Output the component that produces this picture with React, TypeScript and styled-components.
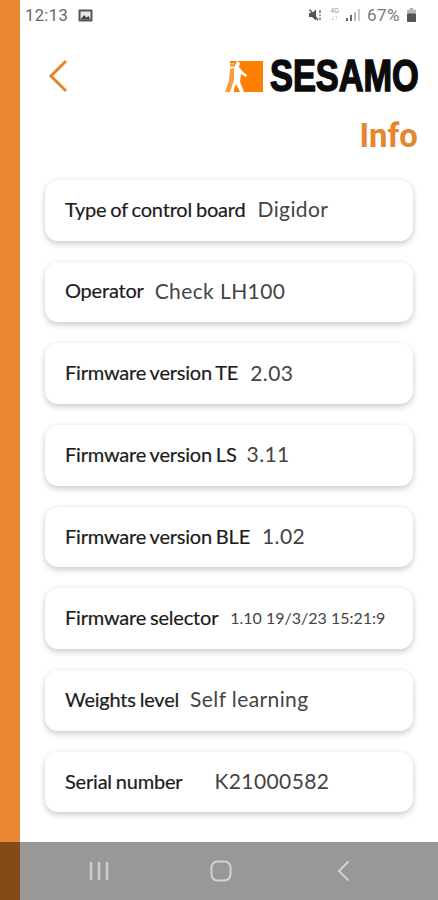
import React, { FC } from 'react';
import styled, { createGlobalStyle } from 'styled-components';

const rows = [
    { label: 'Type of control board', value: 'Digidor', gap: 12 },
    { label: 'Operator', value: 'Check LH100', gap: 11 },
    { label: 'Firmware version TE', value: '2.03', gap: 12 },
    { label: 'Firmware version LS', value: '3.11', gap: 10 },
    { label: 'Firmware version BLE', value: '1.02', gap: 12 },
    { label: 'Firmware selector', value: '1.10 19/3/23 15:21:9', gap: 12, small: true },
    { label: 'Weights level', value: 'Self learning', gap: 11 },
    { label: 'Serial number', value: 'K21000582', gap: 32 },
];

const App: FC = () => (
    <>
        <GlobalStyle />
        <Screen>
            <Main>
                <Stripe />
                <Content>
                    <StatusBar>
                        <StatusLeft>
                            <Clock>12:13</Clock>
                            <svg width="15" height="13" viewBox="0 0 15 13">
                                <rect x="0.5" y="0.5" width="14" height="12" rx="1" fill="#555" />
                                <rect x="2.5" y="2.5" width="10" height="8" fill="#e8e8e8" />
                                <path d="M2.5 10.5 L6 6 L8.5 8.5 L10.5 7 L12.5 10.5 Z" fill="#444" />
                            </svg>
                        </StatusLeft>
                        <StatusRight>
                            <svg width="15" height="14" viewBox="0 0 15 14">
                                <path d="M1 5 H4 L8 1.5 V12.5 L4 9 H1 Z" fill="#555" />
                                <path d="M1.5 1.5 L10 12" stroke="#555" strokeWidth="1.4" />
                                <path d="M12 2 V5 M12 6.5 V8 M12 9.5 V12" stroke="#666" strokeWidth="1.4" />
                            </svg>
                            <NetworkText>
                                <span>4G</span>
                                <span>↓↑</span>
                            </NetworkText>
                            <svg width="14" height="12" viewBox="0 0 14 12">
                                <rect x="0" y="9" width="2" height="3" fill="#666" />
                                <rect x="4" y="6" width="2" height="6" fill="#666" />
                                <rect x="8" y="3" width="2" height="9" fill="#bbb" />
                                <rect x="12" y="0" width="2" height="12" fill="#ccc" />
                            </svg>
                            <Battery>67%</Battery>
                            <svg width="9" height="14" viewBox="0 0 9 14">
                                <rect x="3" y="0" width="3" height="2" fill="#aaa" />
                                <rect x="0" y="1.5" width="9" height="12.5" rx="1" fill="#bbb" />
                                <rect x="0" y="5.5" width="9" height="8.5" rx="1" fill="#555" />
                            </svg>
                        </StatusRight>
                    </StatusBar>
                    <Header>
                        <svg width="20" height="34" viewBox="0 0 20 34">
                            <path d="M18 2 L3 17 L18 32" fill="none" stroke="#e5862f" strokeWidth="3" />
                        </svg>
                        <Logo>
                            <svg width="39" height="33" viewBox="0 0 39 33">
                                <rect x="6" y="1" width="33" height="31" fill="#ff8000" />
                                <path d="M4 3 H10 V32 H0 L4 22 Z" fill="#fff" />
                                <path
                                    d="M13 1 L16 3 L15 7 L19 12 L23 15 L22 17 L17 14 L16 22 L20 32 H16 L12 24 L9 32 H4 L8 22 L9 10 Z"
                                    fill="#fff"
                                />
                                <path d="M6 9 L10 8 L10 20 L6 32 H1 L5 21 Z" fill="#ff9a3a" />
                                <circle cx="8" cy="5" r="2" fill="#ff9a3a" />
                            </svg>
                            <LogoText>SESAMO</LogoText>
                        </Logo>
                    </Header>
                    <Title>Info</Title>
                    <Cards>
                        {rows.map(row => (
                            <Card key={row.label}>
                                <Label $gap={row.gap}>{row.label}</Label>
                                <Value $small={row.small}>{row.value}</Value>
                            </Card>
                        ))}
                    </Cards>
                </Content>
            </Main>
            <NavBar>
                <NavStripe />
                <NavButtons>
                    <svg width="20" height="20" viewBox="0 0 20 20">
                        <path d="M2 1 V19 M10 1 V19 M18 1 V19" stroke="#cfcfcf" strokeWidth="2.4" />
                    </svg>
                    <svg width="22" height="22" viewBox="0 0 22 22">
                        <rect x="1.5" y="1.5" width="19" height="19" rx="6" fill="none" stroke="#d2d2d2" strokeWidth="2" />
                    </svg>
                    <svg width="13" height="22" viewBox="0 0 13 22">
                        <path d="M11.5 1.5 L2 11 L11.5 20.5" fill="none" stroke="#d2d2d2" strokeWidth="2" />
                    </svg>
                </NavButtons>
            </NavBar>
        </Screen>
    </>
);

const GlobalStyle = createGlobalStyle`
    html, body {
        margin: 0;
        padding: 0;
        background: #fff;
    }
`;

const Screen = styled.div`
    display: flex;
    flex-direction: column;
    width: 438px;
    height: 900px;
    overflow: hidden;
    font-family: Lato, 'Liberation Sans', sans-serif;
`;

const Main = styled.div`
    display: flex;
    height: 842px;
`;

const Stripe = styled.div`
    flex: 0 0 20px;
    background: #e98732;
`;

const Content = styled.div`
    flex: 1;
    display: flex;
    flex-direction: column;
    min-width: 0;
`;

const StatusBar = styled.div`
    display: flex;
    align-items: center;
    justify-content: space-between;
    height: 30px;
    padding: 0 22px 0 5px;
`;

const StatusLeft = styled.div`
    display: flex;
    align-items: center;
    gap: 10px;
`;

const Clock = styled.span`
    font-family: Roboto, sans-serif;
    font-size: 16.5px;
    letter-spacing: 0.4px;
    color: #666;
`;

const StatusRight = styled.div`
    display: flex;
    align-items: center;
    gap: 7px;
`;

const NetworkText = styled.span`
    display: flex;
    flex-direction: column;
    font-family: Roboto, sans-serif;
    font-size: 7px;
    line-height: 7px;
    color: #999;
    text-align: center;
`;

const Battery = styled.span`
    font-family: Roboto, sans-serif;
    font-size: 17px;
    letter-spacing: 0.5px;
    color: #777;
`;

const Header = styled.div`
    display: flex;
    align-items: center;
    justify-content: space-between;
    height: 34px;
    margin-top: 29px;
    padding: 0 20px 0 28px;
`;

const Logo = styled.div`
    display: flex;
    align-items: center;
    gap: 7px;
`;

const LogoText = styled.span`
    display: block;
    width: 148px;
    font-family: 'Liberation Sans', Arial, sans-serif;
    font-size: 44px;
    line-height: 34px;
    font-weight: 700;
    color: #0b0b0b;
    -webkit-text-stroke: 1.6px #0b0b0b;
    transform: scaleX(0.78);
    transform-origin: left center;
    white-space: nowrap;
`;

const Title = styled.h1`
    margin: 25px 20px 0 0;
    font-family: Roboto, sans-serif;
    font-size: 33px;
    line-height: 36px;
    font-weight: 700;
    color: #e5862f;
    text-align: right;
`;

const Cards = styled.div`
    display: flex;
    flex-direction: column;
    gap: 21.2px;
    margin-top: 26px;
    padding: 0 25px;
`;

const Card = styled.div`
    display: flex;
    align-items: center;
    height: 60.5px;
    padding: 0 20px 3px;
    box-sizing: border-box;
    background: #fff;
    border-radius: 13px;
    box-shadow: 0 3px 6px rgba(0, 0, 0, 0.18), 0 0 5px rgba(0, 0, 0, 0.05);
    white-space: nowrap;
`;

const Label = styled.span<{ $gap: number }>`
    margin-right: ${p => p.$gap}px;
    font-size: 20px;
    font-weight: 400;
    color: #1c1c1c;
    letter-spacing: -0.2px;
    word-spacing: -1px;
    -webkit-text-stroke: 0.2px #1c1c1c;
`;

const Value = styled.span<{ $small?: boolean }>`
    font-size: ${p => (p.$small ? 16 : 21)}px;
    font-weight: 400;
    color: #444;
    letter-spacing: ${p => (p.$small ? 0 : 0.4)}px;
`;

const NavBar = styled.div`
    display: flex;
    height: 58px;
    background: #989898;
`;

const NavStripe = styled.div`
    flex: 0 0 20px;
    background: #854a17;
`;

const NavButtons = styled.div`
    flex: 1;
    display: grid;
    grid-template-columns: repeat(3, 122px);
    justify-items: center;
    align-items: center;
    justify-content: start;
    padding-left: 18px;
`;

export default App;
